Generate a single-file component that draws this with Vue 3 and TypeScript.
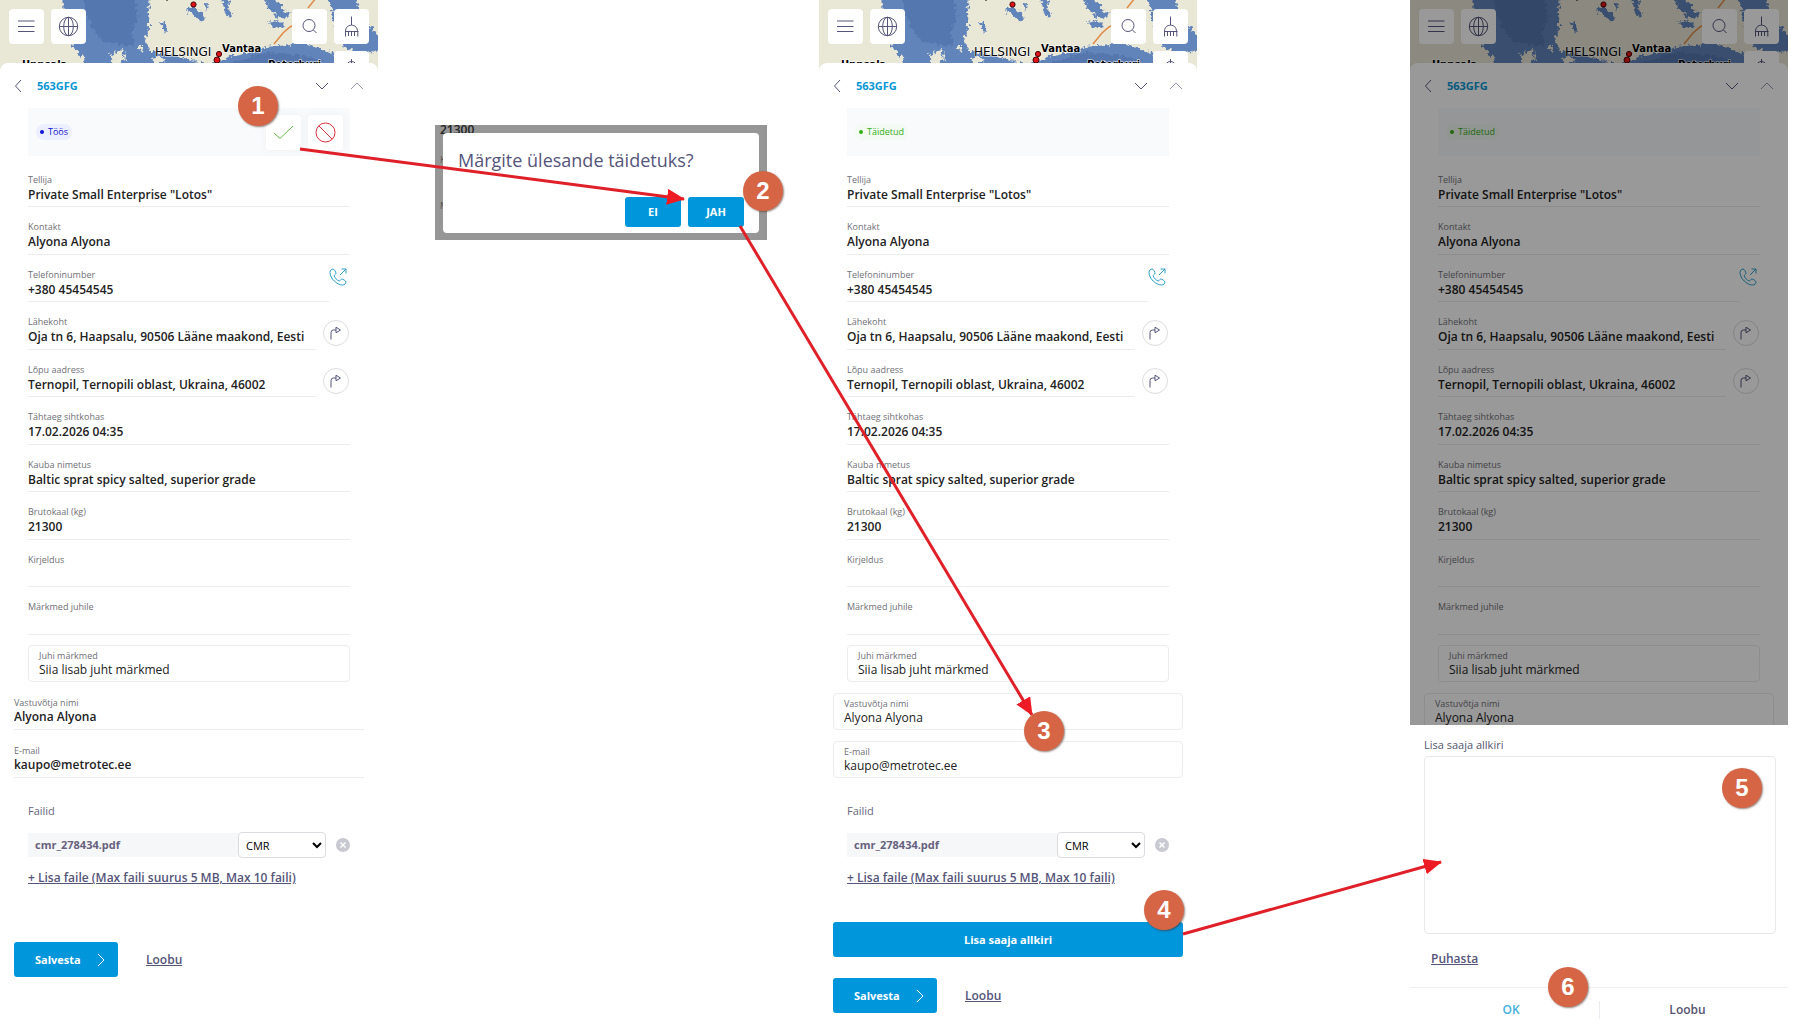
<script setup lang="ts">
interface Field {
  label: string
  value: string
  action?: 'call' | 'route'
}

interface Phone {
  id: string
  status: string
  done: boolean
  signing: boolean
}

const phones: Phone[] = [
  { id: 'active', status: 'Töös', done: false, signing: false },
  { id: 'done', status: 'Täidetud', done: true, signing: false },
  { id: 'sign', status: 'Täidetud', done: true, signing: true },
]

const fields: Field[] = [
  { label: 'Tellija', value: 'Private Small Enterprise "Lotos"' },
  { label: 'Kontakt', value: 'Alyona Alyona' },
  { label: 'Telefoninumber', value: '+380 45454545', action: 'call' },
  { label: 'Lähekoht', value: 'Oja tn 6, Haapsalu, 90506 Lääne maakond, Eesti', action: 'route' },
  { label: 'Lõpu aadress', value: 'Ternopil, Ternopili oblast, Ukraina, 46002', action: 'route' },
  { label: 'Tähtaeg sihtkohas', value: '17.02.2026 04:35' },
  { label: 'Kauba nimetus', value: 'Baltic sprat spicy salted, superior grade' },
  { label: 'Brutokaal (kg)', value: '21300' },
  { label: 'Kirjeldus', value: '' },
  { label: 'Märkmed juhile', value: '' },
]

const receiver = [
  { key: 'name', label: 'Vastuvõtja nimi', value: 'Alyona Alyona' },
  { key: 'mail', label: 'E-mail', value: 'kaupo@metrotec.ee' },
]

const boardWidth = 1798
const badges = [
  { n: 1, x: 258, y: 106 },
  { n: 2, x: 763, y: 191 },
  { n: 3, x: 1044, y: 731 },
  { n: 4, x: 1164, y: 910 },
  { n: 5, x: 1742, y: 788 },
  { n: 6, x: 1568, y: 987 },
]

const arrows = [
  { x1: 300, y1: 149, x2: 684, y2: 199 },
  { x1: 740, y1: 226, x2: 1032, y2: 715 },
  { x1: 1183, y1: 934, x2: 1441, y2: 862 },
]
</script>

<template>
  <main class="board">
    <section v-for="p in phones" :key="p.id" class="phone" :class="p.id">
      <div class="map">
        <svg class="map-art" viewBox="0 0 378 76" preserveAspectRatio="xMidYMin slice" aria-hidden="true">
          <defs>
            <filter :id="'coast-' + p.id" x="-5%" y="-20%" width="110%" height="140%" color-interpolation-filters="sRGB">
              <feTurbulence type="fractalNoise" baseFrequency="0.28" numOctaves="2" seed="7" />
              <feDisplacementMap in="SourceGraphic" scale="8" xChannelSelector="R" yChannelSelector="G" />
            </filter>
          </defs>
          <rect width="378" height="76" fill="#e9e7d6" />
          <g :filter="`url(#coast-${p.id})`" fill="#6184ba">
            <path d="M61-8H151L148 12 149 28 144 42 150 50 170 54 190 60 216 64 228 57 250 53 266 47 290 45 300 38 312 47 330 52 350 60 350 84H90L84 58 72 46 67 30Z" />
            <path d="M327-8H354L360 14 372 28 380 36V50L366 54 350 50 338 42 334 22Z" />
            <path d="M82-8H132L138 16 132 32 134 46 104 42 90 26Z" fill="#5577b0" />
            <path d="M228 64 264 53 292 54 322 60V80H228Z" fill="#5577ad" />
            <path d="M188 6 196 8 203 14 205 22 199 20 194 14 187 12Z" />
            <path d="M222-4 230 4 228 10 233 16 228 18 224 10Z" />
            <path d="M160 22 164 23 168 32 164 31Z" />
            <path d="M264-6 276-2 282 8 290 14 284 20 276 16 268 8Z" />
            <path d="M268 22 278 20 284 26 274 28Z" />
            <path d="M204 2 208 4 206 12Z" />
            <g fill="#e9e7d6">
              <path d="M110 54 122 50 126 60 114 64Z" />
              <path d="M138 46 144 46 141 54Z" />
              <path d="M152 58 160 56 166 61 154 64Z" />
              <path d="M194 62 202 61 200 68Z" />
            </g>
          </g>
          <path d="M316-2 308 8M308 16 300 22 290 27 283 33 274 44" fill="none" stroke="#e08a45" stroke-width="1.5" />
          <g fill="#e1131a" stroke="#400" stroke-width="1">
            <circle cx="193.500" cy="4.500" r="2.600" />
            <circle cx="219" cy="54" r="2.600" />
            <circle cx="217" cy="60" r="3" />
          </g>
          <path d="M166 0H168" stroke="#000" />
          <g class="map-labels">
            <text x="155" y="56" class="capital">HELSINGI</text>
            <text x="222" y="52">Vantaa</text>
            <text x="22" y="68">Uppsala</text>
            <text x="268" y="68">Peterburi</text>
          </g>
        </svg>
        <div class="map-tools">
          <button type="button" class="tile" aria-label="Menüü">
            <svg viewBox="0 0 35 35"><path d="M9 12H25.500M9 17.500H25.500M9 22.500H25.500" /></svg>
          </button>
          <button type="button" class="tile" aria-label="Keel">
            <svg viewBox="0 0 35 35">
              <circle cx="17.500" cy="17.500" r="9.200" />
              <ellipse cx="17.500" cy="17.500" rx="4.800" ry="9.200" />
              <path d="M17.500 8.300V26.700M8.300 17.500H26.700" />
            </svg>
          </button>
          <span class="spacer"></span>
          <button type="button" class="tile" aria-label="Otsi">
            <svg viewBox="0 0 35 35"><circle cx="17" cy="16.500" r="6" /><path d="M21.500 21 24.500 24" /></svg>
          </button>
          <div class="tile-stack">
            <button type="button" class="tile" aria-label="Puhasta kaart">
              <svg viewBox="0 0 35 35">
                <path d="M17.500 7.500V16M11.500 22.500C11.500 18.500 14 16.200 17.500 16.200S23.500 18.500 23.500 22.500M11 22.500H24.500M11.500 22.500V27.500M14.500 23V27M17.500 23V27M20.500 23V27M23.800 22.500V27.500" />
              </svg>
            </button>
            <button type="button" class="tile" aria-label="Asukoht">
              <svg viewBox="0 0 35 35"><circle cx="17.500" cy="16" r="5.500" /><path d="M17.500 8V24" /></svg>
            </button>
          </div>
        </div>
      </div>

      <div class="sheet">
        <header class="head">
          <button type="button" class="icon" aria-label="Tagasi">
            <svg width="8" height="14" viewBox="0 0 8 14"><path d="M7 1 1.500 7 7 13" /></svg>
          </button>
          <h2>563GFG</h2>
          <button type="button" class="icon" aria-label="Järgmine">
            <svg width="14" height="8" viewBox="0 0 14 8"><path d="M1 1 7 7 13 1" /></svg>
          </button>
          <button type="button" class="icon faded" aria-label="Eelmine">
            <svg width="14" height="8" viewBox="0 0 14 8"><path d="M1 7 7 1 13 7" /></svg>
          </button>
        </header>

        <div class="status">
          <span class="pill" :class="{ green: p.done }">{{ p.status }}</span>
          <template v-if="!p.done">
            <button type="button" class="tile" aria-label="Täidetud">
              <svg viewBox="0 0 35 35" class="ok"><path d="M8 18 14 23.500 27 11" /></svg>
            </button>
            <button type="button" class="tile" aria-label="Tühista">
              <svg viewBox="0 0 35 35" class="no"><circle cx="17.500" cy="17.500" r="9.500" /><path d="M10.800 10.800 24.200 24.200" /></svg>
            </button>
          </template>
        </div>

        <dl class="fields">
          <div v-for="f in fields" :key="f.label" class="row">
            <div class="field">
              <dt>{{ f.label }}</dt>
              <dd>{{ f.value }}</dd>
            </div>
            <button v-if="f.action === 'call'" type="button" class="call" aria-label="Helista">
              <svg width="18" height="18" viewBox="0 0 18 18">
                <path d="M1 4.500C1 2.500 2.500 1 4 1 5.500 1 7 4.500 7 5.300 7 6.300 5 7 5.200 7.800 5.800 10 8.300 12.500 10.200 13 11 13.200 11.800 11 12.800 11 13.600 11 17 12.800 17 14 17 15.500 15.500 17 13.500 17 8 17 1 10.500 1 4.500ZM11 7 17 1M12.500 1H17V5.500" />
              </svg>
            </button>
            <button v-else-if="f.action === 'route'" type="button" class="route" aria-label="Juhata teed">
              <svg width="12" height="14" viewBox="0 0 12 14"><path d="M1 13.500V6.500Q1 4 3.500 4H6M6 1.200V6.800L10.500 4Z" /></svg>
            </button>
          </div>
        </dl>

        <form class="form" @submit.prevent>
          <div class="box inset">
            <label :for="p.id + '-note'">Juhi märkmed</label>
            <input :id="p.id + '-note'" type="text" value="Siia lisab juht märkmed" />
          </div>
          <div v-for="r in receiver" :key="r.key" class="box" :class="{ plain: !p.done }">
            <label :for="p.id + '-' + r.key">{{ r.label }}</label>
            <input :id="p.id + '-' + r.key" type="text" :value="r.value" :readonly="!p.done" />
          </div>

          <h3>Failid</h3>
          <div class="file">
            <span class="file-name">cmr_278434.pdf</span>
            <select aria-label="Faili tüüp"><option>CMR</option><option>Muu</option></select>
            <button type="button" class="remove" aria-label="Eemalda fail">
              <svg width="14" height="14" viewBox="0 0 14 14"><circle cx="7" cy="7" r="7" fill="#c9c9d1" stroke="none" /><path d="M4.500 4.500 9.500 9.500M9.500 4.500 4.500 9.500" stroke="#fff" stroke-width="1.500" /></svg>
            </button>
          </div>
          <a href="#" class="link add">+ Lisa faile (Max faili suurus 5 MB, Max 10 faili)</a>

          <div class="actions">
            <button v-if="p.done" type="button" class="primary wide">Lisa saaja allkiri</button>
            <button type="submit" class="primary save">
              Salvesta
              <svg width="8" height="14" viewBox="0 0 8 14"><path d="M1 1 7 7 1 13" /></svg>
            </button>
            <a href="#" class="link">Loobu</a>
          </div>
        </form>
      </div>

      <template v-if="p.signing">
        <div class="dim"></div>
        <div class="sign-sheet">
          <p>Lisa saaja allkiri</p>
          <canvas class="pad" aria-label="Lisa saaja allkiri"></canvas>
          <a href="#" class="link clear">Puhasta</a>
          <div class="choice">
            <button type="button" class="accept">OK</button>
            <button type="button">Loobu</button>
          </div>
        </div>
      </template>
    </section>

    <aside class="confirm">
      <div class="backdrop">
        <span class="ghost strong">21300</span>
        <span class="ghost">K</span>
        <span class="ghost">M</span>
      </div>
      <div class="dialog" role="dialog" aria-label="Märgite ülesande täidetuks?">
        <p>Märgite ülesande täidetuks?</p>
        <div class="dialog-actions">
          <button type="button" class="primary">EI</button>
          <button type="button" class="primary">JAH</button>
        </div>
      </div>
    </aside>

    <svg class="arrows" viewBox="0 0 1798 1026" preserveAspectRatio="none" aria-hidden="true">
      <defs>
        <marker id="tip" markerUnits="userSpaceOnUse" markerWidth="18" markerHeight="16" refX="17" refY="8" orient="auto">
          <path d="M0 0 18 8 0 16Z" fill="#ed1c24" />
        </marker>
      </defs>
      <line v-for="(a, i) in arrows" :key="i" v-bind="a" marker-end="url(#tip)" />
    </svg>
    <span
      v-for="b in badges"
      :key="b.n"
      class="badge"
      :style="{ left: (b.x / boardWidth) * 100 + '%', top: b.y + 'px' }"
    >{{ b.n }}</span>
  </main>
</template>

<style>
body {
  background: #fff;
}
</style>

<style scoped>
.board {
  position: relative;
  display: grid;
  grid-template-columns: 378fr 57fr 332fr 52fr 378fr 213fr 378fr 10fr;
  min-height: 100vh;
  overflow: hidden;
  font-family: "Open Sans", "Noto Sans", sans-serif;
  font-size: 11px;
  line-height: 16px;
  color: #222;
}
.board *,
.board *::before {
  box-sizing: border-box;
}
button,
input,
select {
  font: inherit;
  color: inherit;
}
button {
  padding: 0;
  border: 0;
  background: none;
  cursor: pointer;
}
svg {
  display: block;
  fill: none;
  stroke: #55557a;
}
.phone {
  position: relative;
  grid-row: 1;
  min-width: 0;
}
.active {
  grid-column: 1;
}
.done {
  grid-column: 5;
}
.sign {
  grid-column: 7;
}

/* map strip */
.map {
  position: relative;
  height: 76px;
  overflow: hidden;
}
.map-art {
  position: absolute;
  inset: 0;
  width: 100%;
  height: 100%;
  stroke: none;
}
.map-labels {
  font: bold 10px "DejaVu Sans", sans-serif;
  fill: #000;
  stroke: #fff;
  stroke-width: 1px;
  paint-order: stroke;
}
.map-labels .capital {
  font-weight: normal;
  font-size: 12px;
}
.map-tools {
  position: relative;
  display: flex;
  align-items: flex-start;
  gap: 7px;
  padding: 9px;
}
.spacer {
  flex: 1;
}
.tile-stack {
  display: grid;
  gap: 7px;
}
.tile {
  width: 35px;
  height: 35px;
  border-radius: 4px;
  background: #fff;
}

/* details sheet */
.sheet {
  position: relative;
  margin-top: -13px;
  border-radius: 8px 8px 0 0;
  background: #fff;
}
.head {
  display: flex;
  align-items: center;
  height: 45px;
  padding: 0 14px;
}
.head h2 {
  flex: 1;
  margin: 0 0 0 15px;
  font-size: 11px;
  font-weight: 700;
  color: #0996d4;
}
.icon + .icon {
  margin-left: 21px;
}
.faded {
  opacity: 0.6;
}
.status {
  display: flex;
  align-items: center;
  gap: 7px;
  height: 48px;
  margin: 0 28px;
  padding: 0 7px 0 8px;
  background: #f9fafc;
}
.status .tile {
  box-shadow: 0 0 8px #eef0f4;
}
.ok {
  stroke: #63c044;
}
.no {
  stroke: #d8303c;
}
.pill {
  display: flex;
  align-items: center;
  gap: 4px;
  margin-right: auto;
  padding: 0 4px;
  border-radius: 8px;
  background: #eceffd;
  color: #1414d2;
  font-size: 9px;
}
.pill::before {
  content: "";
  width: 4px;
  height: 4px;
  border-radius: 50%;
  background: currentColor;
}
.pill.green {
  background: #f3faf3;
  color: #35b015;
}
.fields {
  display: grid;
  grid-auto-rows: 47px 48px;
  margin: 4px 28px 0;
}
.row {
  display: flex;
  align-items: center;
}
.field {
  flex: 1;
  align-self: stretch;
  padding-top: 14px;
  border-bottom: 1px solid #ececee;
}
dt,
.box label {
  display: block;
  font-size: 9px;
  line-height: 12px;
  color: #707076;
}
dd {
  margin: 1px 0 0;
  font-size: 12px;
  font-weight: 550;
}
.call {
  margin: 0 3px 4px 0;
}
.call svg {
  stroke: #2e9fcb;
}
.route {
  display: grid;
  place-items: center;
  width: 26px;
  height: 26px;
  margin: 14px 1px 0 7px;
  border: 1px solid #dcdce0;
  border-radius: 50%;
}
.form {
  display: flex;
  flex-direction: column;
  padding: 10px 14px 13px;
}
.box {
  height: 37px;
  margin-bottom: 11px;
  padding: 4px 10px 0;
  border: 1px solid #ececee;
  border-radius: 4px;
}
.box input {
  display: block;
  width: 100%;
  height: 16px;
  padding: 0;
  border: 0;
  outline: 0;
  background: none;
  font-size: 12px;
}
.inset {
  margin-left: 14px;
  margin-right: 14px;
}
.plain {
  padding: 3px 0 0;
  border-width: 1px 0;
  border-top-color: transparent;
  border-radius: 0;
}
.plain input {
  font-weight: 550;
}
h3 {
  margin: 14px 14px 13px;
  font-size: 11px;
  font-weight: 400;
  color: #66667c;
}
.file {
  display: flex;
  align-items: center;
  margin: 0 14px 12px;
}
.file-name {
  flex: 1;
  padding: 4px 7px;
  background: #f6f7f9;
  font-weight: 700;
  color: #66627e;
}
select {
  width: 88px;
  height: 26px;
  padding: 0 3px;
  border: 1px solid #dcdce0;
  border-radius: 4px;
  background: #fff;
  color: #000;
}
.remove {
  margin-left: 10px;
}
.link {
  color: #55557a;
  font-size: 12px;
  font-weight: 550;
}
.add {
  align-self: flex-start;
  margin-left: 14px;
}
.actions {
  display: flex;
  flex-wrap: wrap;
  align-items: center;
  gap: 21px 28px;
  margin-top: 36px;
}
.active .actions {
  margin-top: 56px;
}
.primary {
  border-radius: 3px;
  background: #0096dc;
  color: #fff;
  font-weight: 700;
}
.wide {
  width: 100%;
  height: 35px;
}
.save {
  display: flex;
  align-items: center;
  justify-content: space-between;
  width: 104px;
  height: 35px;
  padding: 0 13px 0 21px;
}
.save svg {
  stroke: #fff;
}

/* signature sheet */
.dim {
  position: absolute;
  inset: 0;
  background: rgba(0, 0, 0, 0.4);
}
.sign-sheet {
  position: absolute;
  left: 0;
  right: 0;
  bottom: 0;
  display: flex;
  flex-direction: column;
  padding-top: 12px;
  background: #fff;
  color: #55556e;
}
.sign-sheet p {
  margin: 0 14px 3px;
}
.pad {
  align-self: stretch;
  height: 178px;
  margin: 0 12px 0 14px;
  border: 1px solid #e8e8ea;
  border-radius: 4px;
}
.clear {
  align-self: flex-start;
  margin: 17px 21px 20px;
}
.choice {
  display: flex;
  justify-content: center;
  padding: 13px 0 7px;
  border-top: 1px solid #f0f0f2;
}
.choice button {
  flex: 0 1 176px;
  height: 18px;
  font-size: 12px;
  font-weight: 550;
}
.choice button + button {
  border-left: 1px solid #ececf0;
}
.choice .accept {
  color: #45b0e0;
}

/* confirmation */
.confirm {
  position: relative;
  grid-column: 3;
  grid-row: 1;
  align-self: start;
  margin-top: 125px;
  padding: 8px 8px 7px;
  background: #969696;
}
.backdrop {
  position: absolute;
  inset: 0;
  display: flex;
  flex-direction: column;
  overflow: hidden;
  padding-left: 5px;
}
.ghost {
  height: 48px;
  padding-top: 4px;
  font-size: 9px;
  color: #555;
}
.ghost.strong {
  height: 24px;
  padding-top: 0;
  font-size: 12px;
  font-weight: 550;
  line-height: 9px;
  color: #222;
}
.dialog {
  position: relative;
  padding: 12px 15px 6px;
  border-radius: 4px;
  background: #fff;
}
.dialog p {
  margin: 0 0 22px;
  font-size: 18px;
  line-height: 30px;
  color: #55557a;
}
.dialog-actions {
  display: flex;
  justify-content: flex-end;
  gap: 7px;
}
.dialog-actions button {
  width: 56px;
  height: 30px;
}

/* annotations */
.arrows {
  position: absolute;
  left: 0;
  top: 0;
  width: 100%;
  height: 1026px;
  stroke: #df2029;
  stroke-width: 3px;
  pointer-events: none;
}
.arrows marker path {
  stroke: none;
}
.badge {
  position: absolute;
  width: 40px;
  height: 40px;
  margin: -20px 0 0 -20px;
  border-radius: 50%;
  background: #d66545;
  box-shadow: 1px 1px 2px rgba(80, 50, 40, 0.6);
  color: #fff;
  font: bold 24px/40px "Liberation Sans", Arial, sans-serif;
  text-align: center;
}
</style>
